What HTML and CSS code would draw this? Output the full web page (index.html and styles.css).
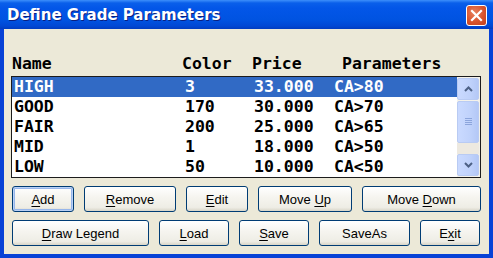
FILE: index.html
```html
<!DOCTYPE html>
<html>
<head>
    <title>Define Grade Parameters</title>
    <link rel="stylesheet" href="styles.css">
</head>
<body>
    <div class="window">
        <div class="titlebar">
            <span class="title">Define Grade Parameters</span>
            <span class="close">
                <svg width="13" height="13" viewBox="0 0 13 13">
                    <path d="M2 2 L11 11 M11 2 L2 11" stroke="#fff" stroke-width="2.2" stroke-linecap="square"/>
                </svg>
            </span>
        </div>

        <div class="client">
            <div class="list-head">
                <span class="h-name">Name</span>
                <span class="h-color">Color</span>
                <span class="h-price">Price</span>
                <span class="h-param">Parameters</span>
            </div>

            <div class="list">
                <div class="rows">
                    <div class="row selected">
                        <span class="c-name">HIGH</span><span class="c-color">3</span><span class="c-price">33.000</span><span class="c-param">CA&gt;80</span>
                    </div>
                    <div class="row">
                        <span class="c-name">GOOD</span><span class="c-color">170</span><span class="c-price">30.000</span><span class="c-param">CA&gt;70</span>
                    </div>
                    <div class="row">
                        <span class="c-name">FAIR</span><span class="c-color">200</span><span class="c-price">25.000</span><span class="c-param">CA&gt;65</span>
                    </div>
                    <div class="row">
                        <span class="c-name">MID</span><span class="c-color">1</span><span class="c-price">18.000</span><span class="c-param">CA&gt;50</span>
                    </div>
                    <div class="row">
                        <span class="c-name">LOW</span><span class="c-color">50</span><span class="c-price">10.000</span><span class="c-param">CA&lt;50</span>
                    </div>
                </div>
                <div class="scrollbar">
                    <div class="sb-btn">
                        <svg width="9" height="6" viewBox="0 0 9 6"><path d="M1 5 L4.5 1.5 L8 5" fill="none" stroke="#4d6185" stroke-width="2"/></svg>
                    </div>
                    <div class="sb-thumb">
                        <svg width="7" height="8" viewBox="0 0 7 8"><path d="M0 0.5 H7 M0 2.5 H7 M0 4.5 H7 M0 6.5 H7" stroke="#8ca5dc" stroke-width="1"/></svg>
                    </div>
                    <div class="sb-track"></div>
                    <div class="sb-btn">
                        <svg width="9" height="6" viewBox="0 0 9 6"><path d="M1 1 L4.5 4.5 L8 1" fill="none" stroke="#4d6185" stroke-width="2"/></svg>
                    </div>
                </div>
            </div>

            <div class="btn-row">
                <button class="btn default w-add"><u>A</u>dd</button>
                <button class="btn w-remove"><u>R</u>emove</button>
                <button class="btn w-edit"><u>E</u>dit</button>
                <button class="btn w-up">Move <u>U</u>p</button>
                <button class="btn w-down">Move <u>D</u>own</button>
            </div>
            <div class="btn-row">
                <button class="btn w-legend"><u>D</u>raw Legend</button>
                <button class="btn w-load"><u>L</u>oad</button>
                <button class="btn w-save"><u>S</u>ave</button>
                <button class="btn w-saveas">SaveAs</button>
                <button class="btn w-exit">E<u>x</u>it</button>
            </div>
        </div>
    </div>
</body>
</html>
```

FILE: styles.css
```css
body {
    margin: 0;
    width: 493px;
    height: 258px;
    overflow: hidden;
    font-family: "Liberation Sans", Arial, sans-serif;
}

.window {
    display: flex;
    flex-direction: column;
    width: 493px;
    height: 258px;
    background-color: #0842d6;
    box-sizing: border-box;
}

.titlebar {
    display: flex;
    align-items: center;
    justify-content: space-between;
    height: 29px;
    padding: 0 7px 0 7px;
    box-sizing: border-box;
    background: linear-gradient(to bottom, #3d8ffb 0px, #0a5fea 3px, #0356e8 8px, #0053e1 20px, #0148d4 26px, #013cc0 29px);
}

.title {
    color: #fff;
    font-family: "DejaVu Sans", sans-serif;
    font-weight: bold;
    font-size: 15px;
    text-shadow: 1px 1px 0 #0a1f80;
    padding-top: 1px;
}

.close {
    display: flex;
    align-items: center;
    justify-content: center;
    width: 21px;
    height: 21px;
    box-sizing: border-box;
    border: 1px solid #fff;
    border-radius: 3px;
    background: radial-gradient(circle at 40% 35%, #e8825f 0%, #d9532c 55%, #c2401c 100%);
    margin-right: -1px;
    margin-top: 1px;
}

.client {
    flex: 1;
    margin: 0 4px 4px 4px;
    background-color: #ece9d8;
    padding: 25px 0 0 7px;
}

.list-head {
    display: flex;
    height: 20px;
    line-height: 20px;
    padding-left: 1px;
    margin-bottom: 2px;
    font-family: "DejaVu Sans Mono", monospace;
    font-weight: bold;
    font-size: 16.5px;
    color: #000;
}

.h-name { width: 170px; }
.h-color { width: 70px; }
.h-price { width: 90px; }

.list {
    display: flex;
    width: 470px;
    height: 102px;
    box-sizing: border-box;
    border: 1px solid #1c1c1c;
    background-color: #fff;
}

.rows {
    flex: 1;
}

.row {
    display: flex;
    height: 20px;
    line-height: 20px;
    padding-left: 2px;
    font-family: "DejaVu Sans Mono", monospace;
    font-weight: bold;
    font-size: 16.5px;
    color: #000;
}

.row.selected {
    background-color: #316ac5;
    color: #fff;
}

.c-name { width: 171px; }
.c-color { width: 69px; }
.c-price { width: 80px; }

.scrollbar {
    display: flex;
    flex-direction: column;
    width: 23px;
    padding: 1px 1px 1px 0;
    box-sizing: border-box;
    background-color: #f4f2ea;
}

.sb-btn, .sb-thumb {
    display: flex;
    align-items: center;
    justify-content: center;
    box-sizing: border-box;
    border: 1px solid #b9cbf3;
    border-radius: 2px;
    background: linear-gradient(to right, #cadaff, #c0d2fb 60%, #b4c8f6);
}

.sb-btn {
    height: 22px;
}

.sb-thumb {
    height: 42px;
    margin-top: 1px;
}

.sb-track {
    flex: 1;
    background-color: #ede9e0;
}

.btn-row {
    display: flex;
    gap: 10px;
    padding-left: 1px;
    margin-top: 8px;
}

.btn {
    height: 26px;
    padding: 0;
    box-sizing: border-box;
    border: 1px solid #003c74;
    border-radius: 3px;
    background: linear-gradient(to bottom, #ffffff 0%, #f6f5f0 40%, #eeede5 85%, #d8d5c8 100%);
    font-family: "Liberation Sans", Arial, sans-serif;
    font-size: 13px;
    color: #000;
}

.btn.default {
    box-shadow: inset 0 0 0 1px #b9d1f5, inset 0 0 0 2px #97b6ea;
}

.btn u {
    text-decoration: underline;
    text-underline-offset: 2px;
}

.w-add { width: 62px; }
.w-remove { width: 92px; }
.w-edit { width: 62px; }
.w-up { width: 94px; }
.w-down { width: 119px; }

.w-legend { width: 137px; }
.w-load { width: 70px; }
.w-save { width: 70px; }
.w-saveas { width: 91px; }
.w-exit { width: 60px; }
```
